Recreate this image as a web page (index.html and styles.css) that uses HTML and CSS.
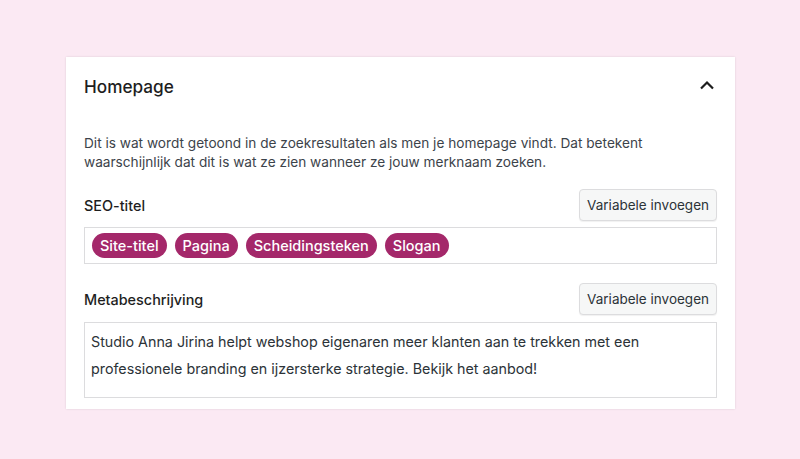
FILE: index.html
```html
<!DOCTYPE html>
<html lang="nl">
<head>
<meta charset="utf-8">
<title>Homepage</title>
<link rel="stylesheet" href="styles.css">
</head>
<body>
<section class="panel">
  <header class="panel-head">
    <h2 class="panel-title">Homepage</h2>
    <svg class="chevron" width="16" height="10" viewBox="0 0 16 10" aria-hidden="true">
      <path d="M2 8.5 L8 2.5 L14 8.5" fill="none" stroke="#1e1e1e" stroke-width="2.2"/>
    </svg>
  </header>
  <p class="desc">Dit is wat wordt getoond in de zoekresultaten als men je homepage vindt. Dat betekent waarschijnlijk dat dit is wat ze zien wanneer ze jouw merknaam zoeken.</p>

  <div class="field-row first">
    <label class="field-label">SEO-titel</label>
    <button class="var-btn">Variabele invoegen</button>
  </div>
  <div class="input-box">
    <span class="pill">Site-titel</span>
    <span class="pill">Pagina</span>
    <span class="pill">Scheidingsteken</span>
    <span class="pill">Slogan</span>
  </div>

  <div class="field-row second">
    <label class="field-label">Metabeschrijving</label>
    <button class="var-btn">Variabele invoegen</button>
  </div>
  <div class="textarea-box">Studio Anna Jirina helpt webshop eigenaren meer klanten aan te trekken met een professionele branding en ijzersterke strategie. Bekijk het aanbod!</div>
</section>
</body>
</html>
```
FILE: styles.css
```css
html, body {
  margin: 0;
  padding: 0;
}
body {
  background: #fbe9f3;
  font-family: Inter, "Noto Sans", sans-serif;
  color: #2c3338;
  height: 459px;
  overflow: hidden;
}
.panel {
  background: #fff;
  margin: 57px 0 0 66px;
  width: 669px;
  box-sizing: border-box;
  padding: 0 18px 11px 18px;
  box-shadow: 0 0 2px rgba(0,0,0,0.12);
}
.panel-head {
  height: 58px;
  display: flex;
  align-items: center;
  justify-content: space-between;
}
.panel-title {
  margin: 0;
  font-size: 17.2px;
  font-weight: 500;
  color: #1e1e1e;
}
.chevron {
  margin-right: 2px;
  margin-top: -2px;
}
.desc {
  margin: 18.5px 0 0 0;
  font-size: 13.65px;
  line-height: 19px;
  color: #3c434a;
}
.field-row {
  display: flex;
  align-items: center;
  justify-content: space-between;
}
.field-row.first { margin-top: 17.5px; }
.field-row.second { margin-top: 19px; }
.field-label {
  font-size: 14.4px;
  font-weight: 500;
  color: #1e1e1e;
}
.var-btn {
  font-family: inherit;
  font-size: 13.5px;
  color: #2c3338;
  background: #f6f7f7;
  border: 1px solid #dcdcde;
  border-radius: 4px;
  height: 32px;
  padding: 0 7px;
  box-shadow: 0 1px 1px rgba(0,0,0,0.06);
}
.input-box {
  margin-top: 6px;
  height: 37px;
  box-sizing: border-box;
  border: 1px solid #dcdcde;
  display: flex;
  align-items: center;
  gap: 8px;
  padding: 0 7px;
}
.pill {
  background: #a4286a;
  color: #fff;
  font-size: 14.5px;
  font-weight: 500;
  height: 25px;
  line-height: 25px;
  padding: 0 8px;
  border-radius: 13px;
}
.textarea-box {
  margin-top: 7px;
  height: 76px;
  box-sizing: border-box;
  border: 1px solid #dcdcde;
  padding: 5px 6px;
  font-size: 14.3px;
  line-height: 27px;
  color: #2c3338;
}
```
